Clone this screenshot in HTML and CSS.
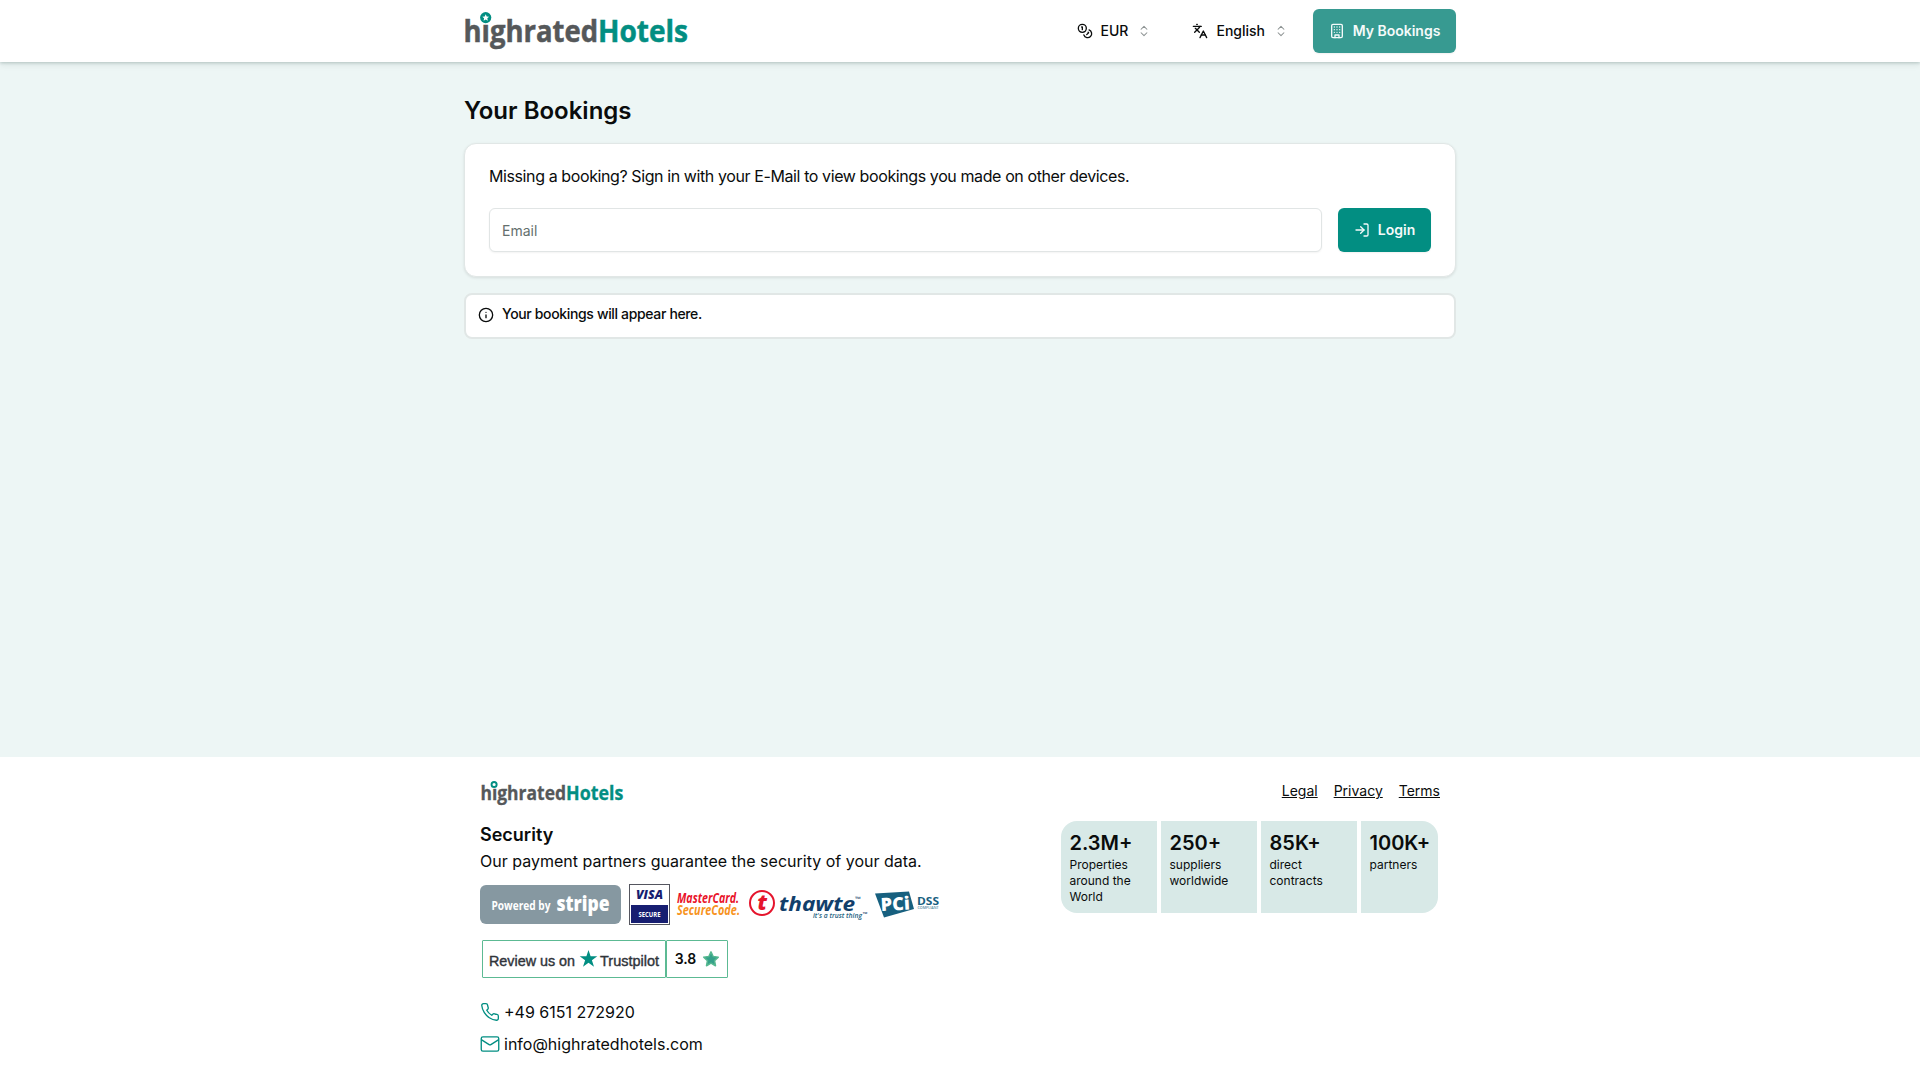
FILE: index.html
```html
<!DOCTYPE html>
<html lang="en">
<head>
    <meta charset="UTF-8">
    <meta name="viewport" content="width=device-width, initial-scale=1.0">
    <title>Your Bookings</title>
    <link rel="stylesheet" href="styles.css">
</head>
<body>
    <header class="header">
        <div class="container header-inner">
            <a class="logo" href="#">
                <svg width="224" height="44" viewBox="0 0 224 44">
                    <text class="logo-grey" x="-.5" y="33" font-size="30" textLength="134.500" lengthAdjust="spacingAndGlyphs">hıghrated</text>
                    <text class="logo-green" x="134" y="33" font-size="30" textLength="90" lengthAdjust="spacingAndGlyphs">Hotels</text>
                    <circle cx="21.7" cy="8.6" r="5.6" fill="#028e82"/>
                    <path d="M21.7 5.2l1 2.3 2.4.2-1.8 1.6.5 2.4-2.1-1.2-2.1 1.2.5-2.4-1.8-1.6 2.4-.2z" fill="#fff"/>
                </svg>
            </a>
            <nav class="nav">
                <button class="picker picker-currency">
                    <svg class="icon" width="16" height="16" viewBox="0 0 24 24">
                        <circle cx="8" cy="8" r="6"/>
                        <path d="M18.09 10.37A6 6 0 1 1 10.34 18"/>
                        <path d="M7 6h1v4"/>
                        <path d="m16.71 13.88.7.71-2.82 2.82"/>
                    </svg>
                    <span>EUR</span>
                    <svg class="icon chevrons" width="14" height="14" viewBox="0 0 24 24">
                        <path d="m7 15 5 5 5-5"/>
                        <path d="m7 9 5-5 5 5"/>
                    </svg>
                </button>
                <button class="picker picker-language">
                    <svg class="icon" width="16" height="16" viewBox="0 0 24 24">
                        <path d="m5 8 6 6"/>
                        <path d="m4 14 6-6 2-3"/>
                        <path d="M2 5h12"/>
                        <path d="M7 2h1"/>
                        <path d="m22 22-5-10-5 10"/>
                        <path d="M14 18h6"/>
                    </svg>
                    <span>English</span>
                    <svg class="icon chevrons" width="14" height="14" viewBox="0 0 24 24">
                        <path d="m7 15 5 5 5-5"/>
                        <path d="m7 9 5-5 5 5"/>
                    </svg>
                </button>
                <button class="btn btn-bookings">
                    <svg class="icon" width="16" height="16" viewBox="0 0 24 24">
                        <rect x="4" y="2" width="16" height="20" rx="2"/>
                        <path d="M9 22v-4h6v4"/>
                        <path d="M8 6h.01M16 6h.01M12 6h.01M12 10h.01M12 14h.01M16 10h.01M16 14h.01M8 10h.01M8 14h.01"/>
                    </svg>
                    <span>My Bookings</span>
                </button>
            </nav>
        </div>
    </header>

    <main class="container main">
        <h1>Your Bookings</h1>
        <section class="card">
            <p>Missing a booking? Sign in with your E-Mail to view bookings you made on other devices.</p>
            <form class="login-form">
                <input type="email" name="email" placeholder="Email">
                <button type="button" class="btn btn-login">
                    <svg class="icon" width="16" height="16" viewBox="0 0 24 24">
                        <path d="M15 3h4a2 2 0 0 1 2 2v14a2 2 0 0 1-2 2h-4"/>
                        <path d="m10 17 5-5-5-5"/>
                        <path d="M15 12H3"/>
                    </svg>
                    <span>Login</span>
                </button>
            </form>
        </section>
        <section class="alert">
            <svg class="icon" width="16" height="16" viewBox="0 0 24 24">
                <circle cx="12" cy="12" r="10"/>
                <path d="M12 16v-4M12 8h.01"/>
            </svg>
            <span>Your bookings will appear here.</span>
        </section>
    </main>

    <footer class="footer">
        <div class="container footer-inner">
            <div class="footer-left">
                <a class="footer-logo" href="#">
                    <svg width="144" height="28" viewBox="0 0 224 44">
                        <text class="logo-grey" x="-.5" y="33" font-size="30" textLength="134.500" lengthAdjust="spacingAndGlyphs">hıghrated</text>
                        <text class="logo-green" x="134" y="33" font-size="30" textLength="90" lengthAdjust="spacingAndGlyphs">Hotels</text>
                        <circle cx="21" cy="8.6" r="4" fill="#fff" stroke="#028e82" stroke-width="3"/>
                    </svg>
                </a>
                <h2>Security</h2>
                <p class="security-text">Our payment partners guarantee the security of your data.</p>
                <div class="badges">
                    <svg class="badge-stripe" width="141" height="39" viewBox="0 0 141 39">
                        <rect width="141" height="39" rx="6" fill="#8698a1"/>
                        <text x="11.500" y="24.500" font-size="11.500" font-weight="700" fill="#fff" textLength="59" lengthAdjust="spacingAndGlyphs">Powered by</text>
                        <text x="76.500" y="26" font-size="21.500" font-weight="800" fill="#fff" textLength="53" lengthAdjust="spacingAndGlyphs">stripe</text>
                    </svg>
                    <svg class="badge-visa" width="41" height="41" viewBox="0 0 41 41">
                        <rect x=".5" y=".5" width="40" height="40" fill="#fff" stroke="#55565f"/>
                        <rect x="2" y="21" width="37" height="18" fill="#171e71"/>
                        <text x="7" y="15.300" font-size="12.500" font-weight="800" font-style="italic" fill="#171e71" textLength="27" lengthAdjust="spacingAndGlyphs">VISA</text>
                        <text x="9.500" y="32.500" font-size="6.500" font-weight="700" fill="#fff" textLength="22" lengthAdjust="spacingAndGlyphs">SECURE</text>
                    </svg>
                    <svg class="badge-mastercard" width="63" height="41" viewBox="0 0 63 41">
                        <text x="0" y="18.500" font-size="13.500" font-weight="700" font-style="italic" fill="#e9142b" textLength="62" lengthAdjust="spacingAndGlyphs">MasterCard.</text>
                        <text x="0" y="30.800" font-size="13.500" font-weight="700" font-style="italic" fill="#f7931e" textLength="63" lengthAdjust="spacingAndGlyphs">SecureCode.</text>
                    </svg>
                    <svg class="badge-thawte" width="120" height="41" viewBox="0 0 120 41">
                        <circle cx="13" cy="19" r="12" fill="#fff" stroke="#e5142c" stroke-width="2"/>
                        <text x="8.500" y="26" font-size="21" font-weight="800" font-style="italic" fill="#e5142c">t</text>
                        <text x="30" y="26.500" font-size="20" font-weight="700" font-style="italic" fill="#123f6b" textLength="76" lengthAdjust="spacingAndGlyphs">thawte</text>
                        <text x="106" y="17" font-size="6" fill="#123f6b" textLength="6" lengthAdjust="spacingAndGlyphs">™</text>
                        <text x="64" y="33.500" font-size="7" font-weight="600" font-style="italic" fill="#1d6180" textLength="49" lengthAdjust="spacingAndGlyphs">it's a trust thing</text>
                        <text x="113.500" y="32" font-size="5.500" fill="#123f6b" textLength="5" lengthAdjust="spacingAndGlyphs">™</text>
                    </svg>
                    <svg class="badge-pci" width="65" height="41" viewBox="0 0 65 41">
                        <path d="M0 9.500L34 7.500L39 25L9 33.500z" fill="#17607f"/>
                        <text x="6" y="27" font-size="18" font-weight="800" fill="#fff" textLength="29" lengthAdjust="spacingAndGlyphs" transform="rotate(-3 6 26)">PCi</text>
                        <text x="42" y="20.500" font-size="11" font-weight="700" fill="#17607f" textLength="22" lengthAdjust="spacingAndGlyphs">DSS</text>
                        <text x="42.500" y="25" font-size="4" font-weight="600" fill="#4f87a0" textLength="21" lengthAdjust="spacingAndGlyphs">COMPLIANT</text>
                    </svg>
                </div>
                <div class="trustpilot">
                    <div class="trust-review">
                        <svg width="182" height="36" viewBox="0 0 182 36">
                            <text class="trust-text" x="6" y="25" textLength="86" lengthAdjust="spacingAndGlyphs">Review us on</text>
                            <path d="M105.500 9l2.100 6.300h6.700l-5.400 4 2.100 6.500-5.500-4-5.500 4 2.100-6.500-5.400-4h6.700z" fill="#028e82"/>
                            <text class="trust-text" x="117" y="25" textLength="59" lengthAdjust="spacingAndGlyphs">Trustpilot</text>
                        </svg>
                    </div>
                    <div class="trust-score">
                        <span>3.8</span>
                        <svg width="18" height="18" viewBox="0 0 24 24">
                            <path d="M12 2.500l2.900 6.200 6.800.8-5 4.700 1.300 6.800-6-3.400-6 3.400 1.300-6.800-5-4.700 6.800-.8z" fill="#35a08a" stroke="#55b890" stroke-width="2" stroke-linejoin="round"/>
                        </svg>
                    </div>
                </div>
                <a class="contact" href="#">
                    <svg class="icon" width="20" height="20" viewBox="0 0 24 24">
                        <path d="M22 16.920v3a2 2 0 0 1-2.180 2 19.790 19.790 0 0 1-8.630-3.070 19.500 19.500 0 0 1-6-6 19.790 19.790 0 0 1-3.070-8.670A2 2 0 0 1 4.110 2h3a2 2 0 0 1 2 1.720 12.840 12.840 0 0 0 .7 2.810 2 2 0 0 1-.45 2.110L8.090 9.910a16 16 0 0 0 6 6l1.270-1.270a2 2 0 0 1 2.110-.45 12.840 12.840 0 0 0 2.810.7A2 2 0 0 1 22 16.920z"/>
                    </svg>
                    <span>+49 6151 272920</span>
                </a>
                <a class="contact" href="#">
                    <svg class="icon" width="20" height="20" viewBox="0 0 24 24">
                        <rect x="1.500" y="3.500" width="21" height="17" rx="2"/>
                        <path d="m22 7-8.970 5.700a1.940 1.940 0 0 1-2.060 0L2 7"/>
                    </svg>
                    <span>info@highratedhotels.com</span>
                </a>
            </div>
            <div class="footer-right">
                <div class="links">
                    <a href="#">Legal</a>
                    <a href="#">Privacy</a>
                    <a href="#">Terms</a>
                </div>
                <div class="stats">
                    <div class="stat"><strong>2.3M+</strong><span>Properties around the World</span></div>
                    <div class="stat"><strong>250+</strong><span>suppliers worldwide</span></div>
                    <div class="stat"><strong>85K+</strong><span>direct contracts</span></div>
                    <div class="stat"><strong>100K+</strong><span>partners</span></div>
                </div>
            </div>
        </div>
    </footer>
</body>
</html>
```
FILE: styles.css
```css
* {
    box-sizing: border-box;
}

body {
    margin: 0;
    min-height: 1080px;
    display: flex;
    flex-direction: column;
    font-family: Inter, sans-serif;
    font-size: 16px;
    line-height: 24px;
    color: #0a0c0c;
    background-color: #edf6f5;
}

h1, h2, p {
    margin: 0;
}

a {
    color: inherit;
}

svg {
    overflow: visible;
}

button {
    font-family: inherit;
    font-size: 14px;
    line-height: 20px;
    font-weight: 500;
    color: inherit;
    border: none;
    background: none;
    padding: 0;
}

.container {
    width: 992px;
    margin: 0 auto;
}

.icon {
    fill: none;
    stroke: currentColor;
    stroke-width: 2;
    stroke-linecap: round;
    stroke-linejoin: round;
    flex-shrink: 0;
}

/* header */
.header {
    height: 62px;
    background: white;
    box-shadow: 0 1px 3px rgba(0,40,35,0.2), 0 4px 6px rgba(0,40,35,0.06);
}

.header-inner {
    height: 62px;
    display: flex;
    align-items: center;
    justify-content: space-between;
}

.logo, .footer-logo {
    display: flex;
}

.logo-grey, .logo-green {
    font-family: "Open Sans", sans-serif;
    font-weight: 700;
    fill: #55585a;
    stroke: #55585a;
    stroke-width: 0.5px;
}

.logo-green {
    fill: #028e82;
    stroke: #028e82;
}

.nav {
    display: flex;
    align-items: center;
}

.picker {
    display: flex;
    align-items: center;
    gap: 8px;
}

.picker-currency {
    margin-right: 41px;
}

.picker-language {
    margin-right: 25px;
}

.chevrons {
    color: #8c9292;
    stroke-width: 1.8;
    margin-left: 1px;
}

.btn {
    height: 44px;
    display: flex;
    align-items: center;
    justify-content: center;
    gap: 8px;
    border-radius: 6px;
    color: #f5fafa;
    font-weight: 600;
    box-shadow: 0 1px 2px rgba(0,0,0,0.06);
}

.btn-bookings {
    width: 143px;
    background: #379a91;
}

.btn-login {
    width: 93px;
    background: #028e82;
}

/* bookings */
.main {
    height: 695px;
    padding-top: 33px;
}

h1 {
    font-size: 24px;
    line-height: 32px;
    font-weight: 600;
    margin-bottom: 16px;
}

.card {
    height: 134px;
    padding: 20px 24px 24px;
    background: white;
    border: 1px solid #e1e7e6;
    border-radius: 12px;
    box-shadow: 0 1px 3px rgba(0,0,0,0.1);
    margin-bottom: 16px;
}

.card p {
    letter-spacing: -0.4px;
}

.login-form {
    display: flex;
    gap: 16px;
    margin-top: 20px;
}

.login-form input {
    flex: 1;
    height: 44px;
    padding: 0 12px;
    border: 1px solid #e1e5e5;
    border-radius: 6px;
    font-family: inherit;
    font-size: 14px;
    background: white;
    box-shadow: 0 1px 2px rgba(0,0,0,0.05);
}

.login-form input::placeholder {
    color: #64706e;
}

.alert {
    height: 46px;
    display: flex;
    gap: 8px;
    padding: 9px 12px;
    background: white;
    border: 2px solid #e1e7e6;
    border-radius: 8px;
    font-size: 14px;
    line-height: 20px;
    font-weight: 500;
    letter-spacing: -0.35px;
}

.alert .icon {
    margin-top: 3px;
}

/* footer */
.footer {
    flex: 1;
    background: white;
}

.footer-inner {
    display: flex;
    justify-content: space-between;
    padding: 22px 16px 0;
}

.footer-logo {
    margin-bottom: 14px;
}

h2 {
    font-size: 18px;
    line-height: 28px;
    font-weight: 600;
}

.badges {
    display: flex;
    align-items: center;
    height: 41px;
    margin-top: 11px;
    font-family: "Open Sans", sans-serif;
}

.badge-visa {
    margin-left: 8px;
}

.badge-mastercard {
    margin-left: 7px;
}

.badge-thawte {
    margin-left: 9px;
}

.badge-pci {
    margin-left: 6px;
}

.trustpilot {
    display: flex;
    height: 38px;
    margin: 15px 0 22px 2px;
}

.trust-review, .trust-score {
    border: 1px solid #5cba93;
    border-radius: 1px;
}

.trust-review {
    width: 184px;
}

.trust-text {
    font-family: "Liberation Sans", sans-serif;
    font-size: 14.5px;
    fill: #30343a;
    stroke: #30343a;
    stroke-width: 0.4px;
}

.trust-score {
    width: 62px;
    display: flex;
    align-items: center;
    justify-content: center;
    gap: 6px;
    padding-left: 1px;
    font-size: 14px;
    font-weight: 600;
}

.contact {
    display: flex;
    align-items: center;
    gap: 4px;
    margin-bottom: 8px;
    text-decoration: none;
}

.contact .icon {
    color: #028e82;
    stroke-width: 1.6;
}

.links {
    display: flex;
    justify-content: flex-end;
    gap: 16px;
    font-size: 14px;
    line-height: 20px;
    margin: 2px 0 20px;
}

.stats {
    display: flex;
    gap: 4px;
    margin-right: 2px;
    border-radius: 16px;
    overflow: hidden;
}

.stat {
    width: 96px;
    height: 92px;
    padding: 8px 8px 8px 8.5px;
    background: #d8e9e7;
    display: flex;
    flex-direction: column;
}

.stat:last-child {
    width: 77px;
}

.stat strong {
    font-size: 20px;
    line-height: 28px;
    font-weight: 600;
}

.stat span {
    font-size: 12px;
    line-height: 16px;
}
```
